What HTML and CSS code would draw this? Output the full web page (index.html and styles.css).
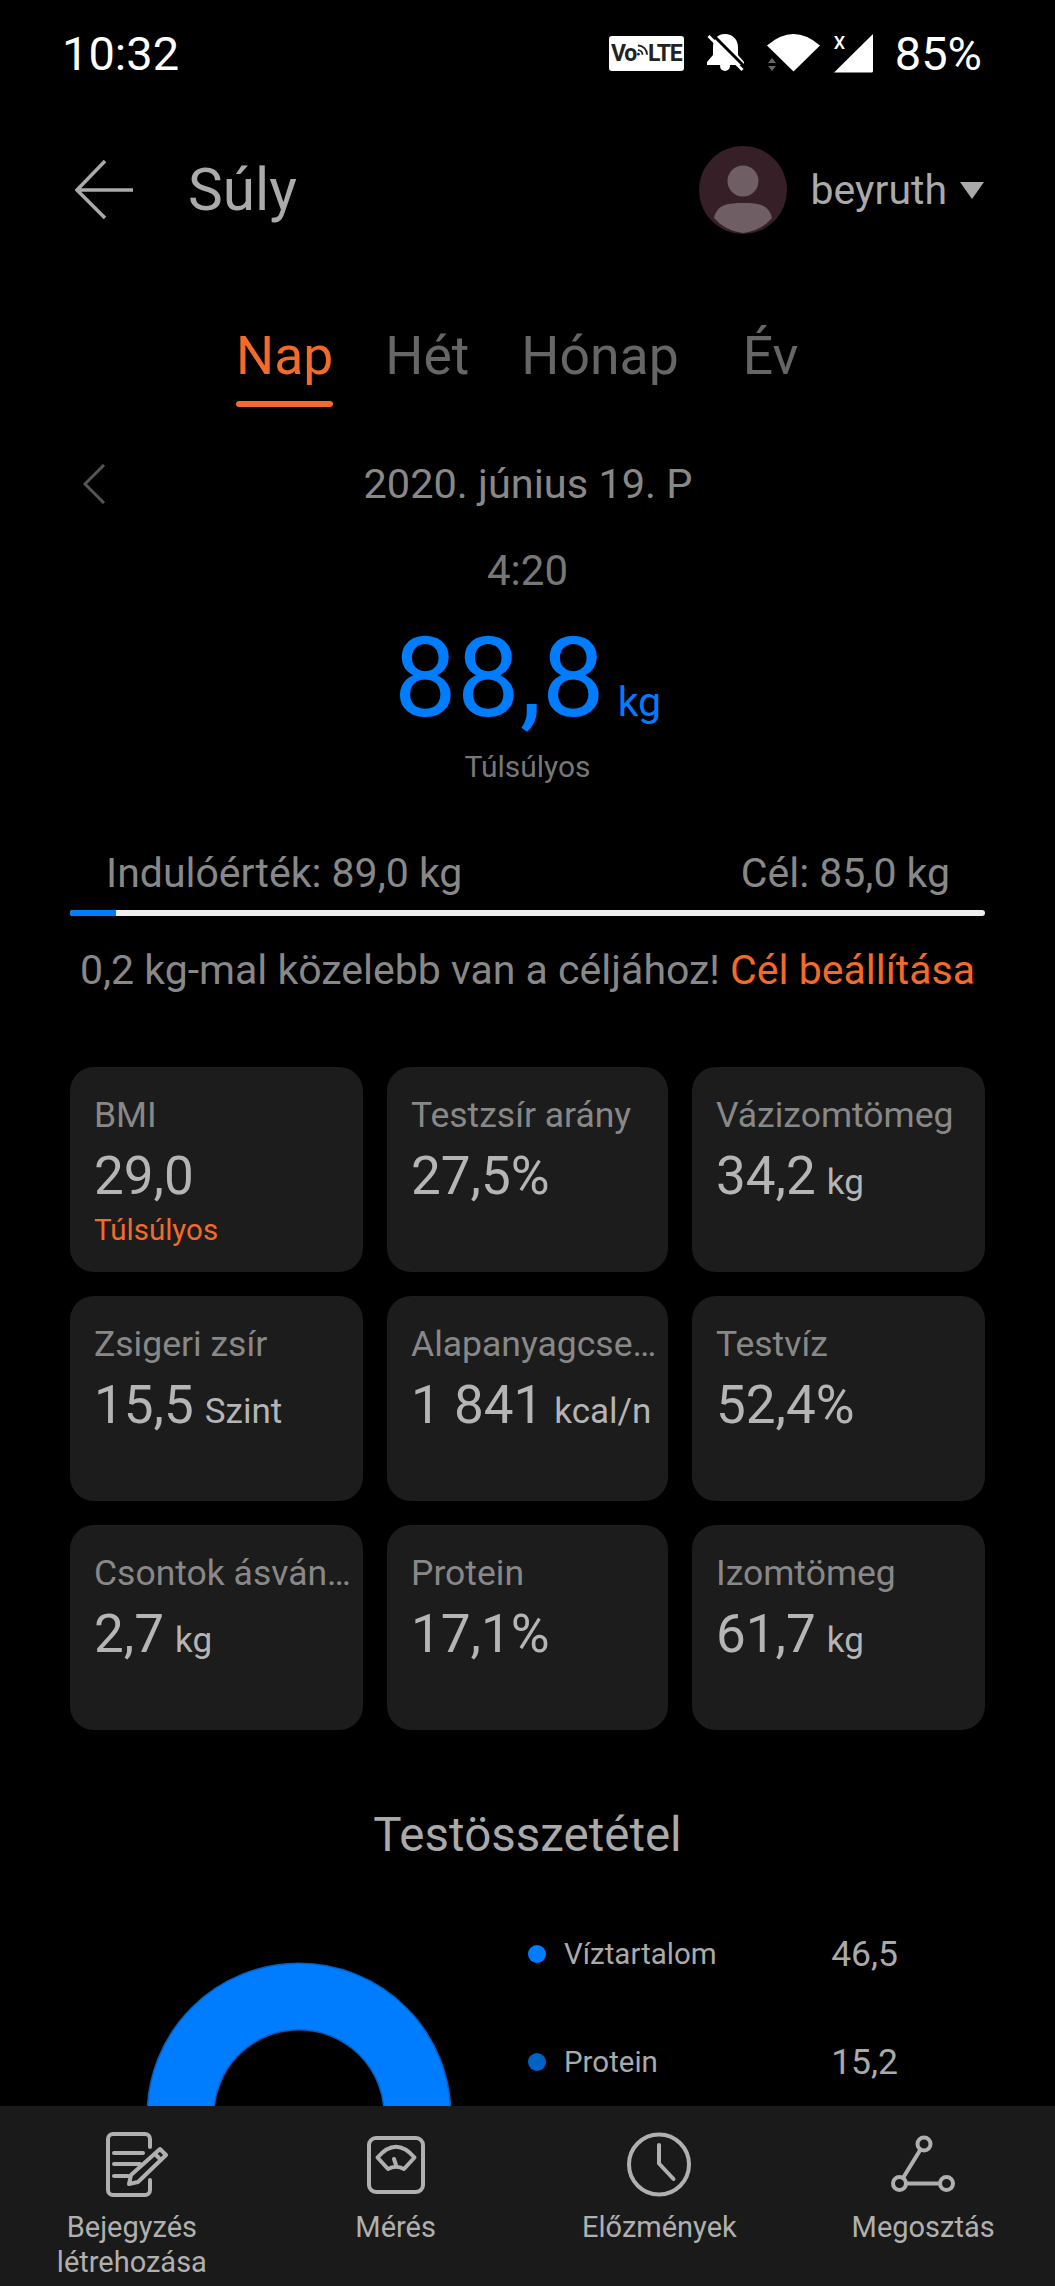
FILE: index.html
```html
<!DOCTYPE html>
<html lang="hu">
<head>
    <meta charset="UTF-8">
    <title>Súly</title>
    <link rel="stylesheet" href="styles.css">
</head>
<body>
<div class="page">
    <div class="content">
        <div class="status">
            <span class="clock">10:32</span>
            <div class="status-icons">
                <span class="volte">Vo<svg class="volte-waves" viewBox="0 0 12 18" width="11" height="18"><path d="M1 8a5 5 0 0 1 5 5M1 3a10 10 0 0 1 10 10" fill="none" stroke="#222" stroke-width="2"/><circle cx="1.500" cy="12.500" r="1.500" fill="#222"/></svg>LTE</span>
                <svg class="bell" viewBox="0 0 40 40" width="40" height="40">
                    <path d="M19 1C11 1 7 7 7 14v8l-6 7v3h37v-3l-6-7v-8C32 7 27 1 19 1z" fill="#fff"/>
                    <circle cx="19" cy="33" r="5" fill="#fff"/>
                    <path d="M5 0l35 35" stroke="#000" stroke-width="3"/>
                    <path d="M2.500 3l34 34" stroke="#fff" stroke-width="3"/>
                </svg>
                <svg class="wifi" viewBox="0 0 54 38" width="54" height="38">
                    <path d="M0 11.500Q26.500-11.500 53 11.500L26.500 37.500z" fill="#fff"/>
                    <path d="M5 24l4 5H1zM5 37l-4-5h8z" fill="#666"/>
                </svg>
                <div class="signal">
                    <svg viewBox="0 0 40 39" width="40" height="39"><path d="M39 0v37a1.500 1.500 0 0 1-1.500 1.500H0z" fill="#fff"/></svg>
                    <span class="signal-x">X</span>
                </div>
                <span class="clock battery">85%</span>
            </div>
        </div>

        <div class="header">
            <svg class="back" viewBox="0 0 60 60" width="60" height="60"><path d="M30 1L2 30l28 28M2 30h56" fill="none" stroke="#aaa" stroke-width="3.500"/></svg>
            <span class="title">Súly</span>
            <svg class="avatar" viewBox="0 0 88 88" width="88" height="88">
                <circle cx="44" cy="44" r="44" fill="#361f27"/>
                <circle cx="44" cy="35" r="15.500" fill="#6f5f64"/>
                <path d="M15 72c3-14 15-15 29-15s26 1 29 15a44 44 0 0 1-29 15 44 44 0 0 1-29-15z" fill="#6f5f64"/>
            </svg>
            <span class="user">beyruth</span>
            <span class="caret"></span>
        </div>

        <div class="tabs">
            <div class="tab active">Nap</div>
            <div class="tab">Hét</div>
            <div class="tab">Hónap</div>
            <div class="tab tab-last">Év</div>
        </div>

        <div class="date-row">
            <svg class="prev" viewBox="0 0 24 40" width="24" height="40"><path d="M22 1L3 20l19 19" fill="none" stroke="#555" stroke-width="3"/></svg>
            <span class="date">2020. június 19. P</span>
        </div>
        <div class="time">4:20</div>
        <div class="weight"><span class="weight-num">88,8</span><span class="weight-unit">kg</span></div>
        <div class="weight-state">Túlsúlyos</div>

        <div class="goal">
            <span>Indulóérték: 89,0 kg</span>
            <span>Cél: 85,0 kg</span>
        </div>
        <div class="goal-bar"><div class="goal-fill"></div></div>
        <div class="goal-msg">0,2 kg-mal közelebb van a céljához! <span class="orange">Cél beállítása</span></div>

        <div class="cards">
            <div class="card">
                <div class="card-label">BMI</div>
                <div class="card-value">29,0</div>
                <div class="card-note">Túlsúlyos</div>
            </div>
            <div class="card">
                <div class="card-label">Testzsír arány</div>
                <div class="card-value">27,5%</div>
            </div>
            <div class="card">
                <div class="card-label">Vázizomtömeg</div>
                <div class="card-value">34,2<span class="unit">kg</span></div>
            </div>
            <div class="card">
                <div class="card-label">Zsigeri zsír</div>
                <div class="card-value">15,5<span class="unit">Szint</span></div>
            </div>
            <div class="card">
                <div class="card-label">Alapanyagcse…</div>
                <div class="card-value">1 841<span class="unit">kcal/n</span></div>
            </div>
            <div class="card">
                <div class="card-label">Testvíz</div>
                <div class="card-value">52,4%</div>
            </div>
            <div class="card">
                <div class="card-label">Csontok ásván…</div>
                <div class="card-value">2,7<span class="unit">kg</span></div>
            </div>
            <div class="card">
                <div class="card-label">Protein</div>
                <div class="card-value">17,1%</div>
            </div>
            <div class="card">
                <div class="card-label">Izomtömeg</div>
                <div class="card-value">61,7<span class="unit">kg</span></div>
            </div>
        </div>

        <div class="section-title">Testösszetétel</div>
        <div class="chart">
            <svg class="donut" viewBox="0 0 306 306" width="306" height="306"><circle cx="153" cy="153" r="118.500" fill="none" stroke="#0062c4" stroke-width="68"/><circle cx="153" cy="153" r="118.500" fill="none" stroke="#007dff" stroke-width="65"/></svg>
            <div class="legend">
                <div class="legend-row">
                    <span class="dot"></span>
                    <span class="legend-name">Víztartalom</span>
                    <span class="legend-value">46,5</span>
                </div>
                <div class="legend-row">
                    <span class="dot dot-dark"></span>
                    <span class="legend-name">Protein</span>
                    <span class="legend-value">15,2</span>
                </div>
            </div>
        </div>
    </div>

    <div class="toolbar">
        <div class="tool">
            <svg class="tool-icon" viewBox="0 0 72 72" width="72" height="72">
                <path d="M54 19v-8a5 5 0 0 0-5-5H17a5 5 0 0 0-5 5v51a5 5 0 0 0 5 5h32a5 5 0 0 0 5-5V52M18 25h29M18 36h26M18 48h14"/>
                <path d="M64 21l6 6-28 27-9 2 2-9zM59 26l6 6"/>
            </svg>
            <div class="tool-label">Bejegyzés<br>létrehozása</div>
        </div>
        <div class="tool">
            <svg class="tool-icon" viewBox="0 0 72 72" width="72" height="72">
                <rect x="9" y="10" width="54" height="54" rx="7"/>
                <path d="M17.500 29.500Q36 8 54.500 29.500L44 41Q36 36.500 28 41zM36 37l-2-6"/>
            </svg>
            <div class="tool-label">Mérés</div>
        </div>
        <div class="tool">
            <svg class="tool-icon" viewBox="0 0 72 72" width="72" height="72">
                <circle cx="36" cy="36.500" r="30"/>
                <path d="M36 17v18.500L50.500 51"/>
            </svg>
            <div class="tool-label">Előzmények</div>
        </div>
        <div class="tool">
            <svg class="tool-icon" viewBox="0 0 72 72" width="72" height="72">
                <circle cx="37" cy="16" r="6.500"/>
                <circle cx="12.500" cy="55.500" r="6.500"/>
                <circle cx="59.500" cy="55.500" r="6.500"/>
                <path d="M33.500 21.500L16 50M19 55.500h34"/>
            </svg>
            <div class="tool-label">Megosztás</div>
        </div>
    </div>
</div>
</body>
</html>
```
FILE: styles.css
```css
*{
    box-sizing: border-box;
}
body{
    margin: 0;
    background: #000;
    font-family: Roboto, "Noto Sans", sans-serif;
}
.page{
    width: 1055px;
    height: 2286px;
    display: flex;
    flex-direction: column;
    overflow: hidden;
}
.content{
    flex: 1;
    overflow: hidden;
}
.orange{
    color: #f36a2a;
}

/* status bar */
.status{
    height: 106px;
    padding: 0 73px 0 62px;
    display: flex;
    align-items: center;
    justify-content: space-between;
}
.clock{
    font-size: 47px;
    color: #fff;
}
.status-icons{
    display: flex;
    align-items: center;
}
.volte{
    width: 75px;
    height: 35px;
    background: #fff;
    border-radius: 3px;
    color: #222;
    font-size: 23px;
    font-weight: 700;
    line-height: 35px;
    letter-spacing: -1.2px;
    display: flex;
    justify-content: center;
    align-items: center;
}
.volte-waves{
    margin: 0 0 4px 1px;
}
.bell{
    margin-left: 22px;
}
.wifi{
    margin-left: 21px;
}
.signal{
    margin-left: 13px;
    position: relative;
    height: 39px;
}
.signal svg{
    display: block;
}
.signal-x{
    position: absolute;
    left: 0;
    top: 0;
    font-size: 18px;
    font-weight: 500;
    line-height: 18px;
    color: #fff;
}
.battery{
    margin-left: 21px;
}

/* header */
.header{
    height: 168px;
    padding: 0 71px 0 75px;
    display: flex;
    align-items: center;
}
.title{
    margin-left: 53px;
    font-size: 58.500px;
    color: #aaa;
}
.avatar{
    margin-left: auto;
}
.user{
    margin-left: 24px;
    font-size: 41px;
    color: #aaa;
}
.caret{
    margin-left: 13px;
    width: 0;
    height: 0;
    border-left: 12.500px solid transparent;
    border-right: 12.500px solid transparent;
    border-top: 17px solid #aaa;
}

/* tabs */
.tabs{
    margin-top: 51px;
    padding-left: 236px;
    display: flex;
    gap: 52px;
}
.tab{
    font-size: 53.500px;
    line-height: 62px;
    color: #666;
    padding-bottom: 20px;
    position: relative;
}
.tab-last{
    margin-left: 12px;
}
.tab.active{
    color: #f36a2a;
}
.tab.active::after{
    content: "";
    position: absolute;
    left: 0;
    right: 0;
    bottom: 0;
    height: 6px;
    border-radius: 3px;
    background: #f36a2a;
}

/* date and weight */
.date-row{
    margin-top: 52px;
    padding-left: 82px;
    display: grid;
    grid-template-columns: 1fr auto 1fr;
    align-items: center;
    width: 974px;
}
.date{
    font-size: 41.500px;
    line-height: 50px;
    color: #888;
}
.time{
    margin-top: 37px;
    text-align: center;
    font-size: 42px;
    line-height: 50px;
    color: #777;
}
.weight{
    margin-top: 27px;
    display: flex;
    justify-content: center;
    align-items: baseline;
    gap: 13px;
    color: #007dff;
    line-height: 110px;
}
.weight-num{
    font-size: 112px;
}
.weight-unit{
    font-size: 41px;
    line-height: 40px;
}
.weight-state{
    margin-top: 14px;
    text-align: center;
    font-size: 30px;
    line-height: 40px;
    color: #777;
}

/* goal */
.goal{
    margin-top: 61px;
    padding: 0 105px 0 106px;
    display: flex;
    justify-content: space-between;
    font-size: 41px;
    line-height: 50px;
    color: #888;
}
.goal-bar{
    margin: 12px 70px 0;
    height: 6px;
    border-radius: 3px;
    background: #eee;
    overflow: hidden;
}
.goal-fill{
    width: 46px;
    height: 6px;
    background: #007dff;
}
.goal-msg{
    margin-top: 29px;
    text-align: center;
    font-size: 41px;
    line-height: 50px;
    color: #888;
}

/* cards */
.cards{
    margin: 72px 70px 0;
    display: grid;
    grid-template-columns: 293px 281px 293px;
    grid-auto-rows: 205px;
    gap: 24px;
}
.card{
    background: #1c1c1c;
    border-radius: 24px;
    padding: 26px 0 0 24px;
    white-space: nowrap;
}
.card-label{
    font-size: 35.500px;
    line-height: 44px;
    color: #888;
}
.card-value{
    margin-top: 9px;
    font-size: 53px;
    line-height: 60px;
    color: #b5b5b5;
}
.unit{
    margin-left: 11px;
    font-size: 35px;
}
.card-note{
    margin-top: 4px;
    font-size: 29.500px;
    line-height: 40px;
    color: #f36a2a;
}

/* body composition */
.section-title{
    margin-top: 75px;
    text-align: center;
    font-size: 47.500px;
    line-height: 60px;
    color: #aaa;
}
.chart{
    margin-top: 35px;
    padding-left: 146px;
    display: flex;
    align-items: flex-start;
}
.donut{
    margin-top: 62px;
    flex: none;
}
.legend{
    margin-left: 76px;
    width: 370px;
}
.legend-row{
    height: 108px;
    display: flex;
    align-items: center;
}
.dot{
    width: 18px;
    height: 18px;
    border-radius: 50%;
    background: #007dff;
}
.dot-dark{
    background: #0062c4;
}
.legend-name{
    margin-left: 18px;
    font-size: 29.500px;
    color: #aaa;
}
.legend-value{
    margin-left: auto;
    font-size: 35.500px;
    color: #aaa;
}

/* bottom bar */
.toolbar{
    height: 180px;
    flex: none;
    background: #1a1a1a;
    display: flex;
}
.tool{
    flex: 1;
    padding-top: 22px;
    text-align: center;
}
.tool-icon{
    display: block;
    margin: 0 auto;
    fill: none;
    stroke: #b0b0b0;
    stroke-width: 4;
    stroke-linecap: round;
    stroke-linejoin: round;
}
.tool-label{
    margin-top: 10px;
    font-size: 29px;
    line-height: 35px;
    color: #b0b0b0;
}
```
